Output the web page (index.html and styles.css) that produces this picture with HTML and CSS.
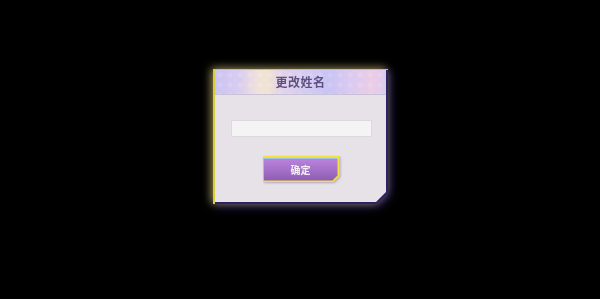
FILE: index.html
```html
<!DOCTYPE html>
<html lang="zh">
<head>
<meta charset="utf-8">
<title>更改姓名</title>
<link rel="stylesheet" href="styles.css">
</head>
<body>
<div class="stage">
  <div class="glow">
    <div class="dialog">
      <div class="dialog-inner">
        <div class="header"><span class="title">更改姓名</span></div>
        <div class="content">
          <input class="name-input" type="text" value="">
          <div class="btn-wrap">
            <button class="btn" type="button"><span class="btn-face">确定</span></button>
          </div>
        </div>
      </div>
    </div>
  </div>
</div>
</body>
</html>
```
FILE: styles.css
```css
html, body {
  margin: 0;
  padding: 0;
  background: #000;
  width: 600px;
  height: 299px;
  overflow: hidden;
}
.stage {
  padding: 69px 0 0 213px;
}
.glow {
  width: 175px;
  filter: drop-shadow(-2px -1px 4px rgba(230, 215, 60, 0.6)) drop-shadow(2px 2px 4px rgba(40, 30, 110, 0.9));
}
.dialog {
  width: 175px;
  height: 135px;
  box-sizing: border-box;
  background: #2c2462;
  border-left: 2px solid #d9cc3c;
  border-top: 1px solid #cfc35a;
  padding: 0 2px 2px 0;
  clip-path: polygon(0 0, 100% 0, 100% calc(100% - 11px), calc(100% - 11px) 100%, 0 100%);
}
.dialog-inner {
  height: 100%;
  background: #e6e2e8;
  clip-path: polygon(0 0, 100% 0, 100% calc(100% - 10px), calc(100% - 10px) 100%, 0 100%);
  display: flex;
  flex-direction: column;
}
.header {
  height: 24px;
  flex: none;
  display: flex;
  align-items: center;
  justify-content: center;
  border-bottom: 1px solid #c9c2d6;
  background:
    radial-gradient(circle at 50% 50%, rgba(255, 255, 255, 0.12) 2px, transparent 3px) 0 0 / 10px 10px,
    linear-gradient(90deg, #cbc4f2 0%, #d8ccf0 14%, #efe0dc 24%, #f2e4d2 30%, #e2d2ec 40%, #d3cbf2 55%, #c8c4f4 66%, #dccaf0 80%, #ebcde6 92%, #dccbef 100%);
}
.title {
  font-family: "Noto Sans CJK SC", "Noto Sans CJK JP", sans-serif;
  font-size: 12px;
  font-weight: 700;
  color: #605080;
  letter-spacing: 0.5px;
  line-height: 1;
}
.content {
  display: flex;
  flex-direction: column;
  align-items: center;
  padding-top: 25px;
}
.name-input {
  display: block;
  box-sizing: border-box;
  width: 141px;
  height: 17px;
  margin: 0 0 0 2px;
  padding: 0;
  border: 1px solid #dcd8de;
  background: #f4f4f5;
  outline: none;
}
.btn-wrap {
  margin-top: 19px;
  margin-left: 1px;
  filter: drop-shadow(1px 1px 1px rgba(80, 60, 100, 0.35));
}
.btn {
  display: block;
  width: 77px;
  height: 26px;
  padding: 0;
  border: none;
  background: #f2e23a;
  clip-path: polygon(0 0, 100% 0, 100% calc(100% - 6px), calc(100% - 6px) 100%, 0 100%);
  cursor: pointer;
}
.btn-face {
  display: flex;
  align-items: center;
  justify-content: center;
  box-sizing: border-box;
  width: 75px;
  height: 23px;
  border-top: 1px solid #9cc0e6;
  border-left: 1px solid #9cc0e6;
  background: linear-gradient(180deg, #ba82dc 0%, #a470c8 50%, #8c5cb2 100%);
  clip-path: polygon(0 0, 100% 0, 100% calc(100% - 5px), calc(100% - 5px) 100%, 0 100%);
  font-family: "Noto Sans CJK SC", "Noto Sans CJK JP", sans-serif;
  font-size: 10px;
  font-weight: 700;
  color: #f4eef8;
  line-height: 1;
}
```
